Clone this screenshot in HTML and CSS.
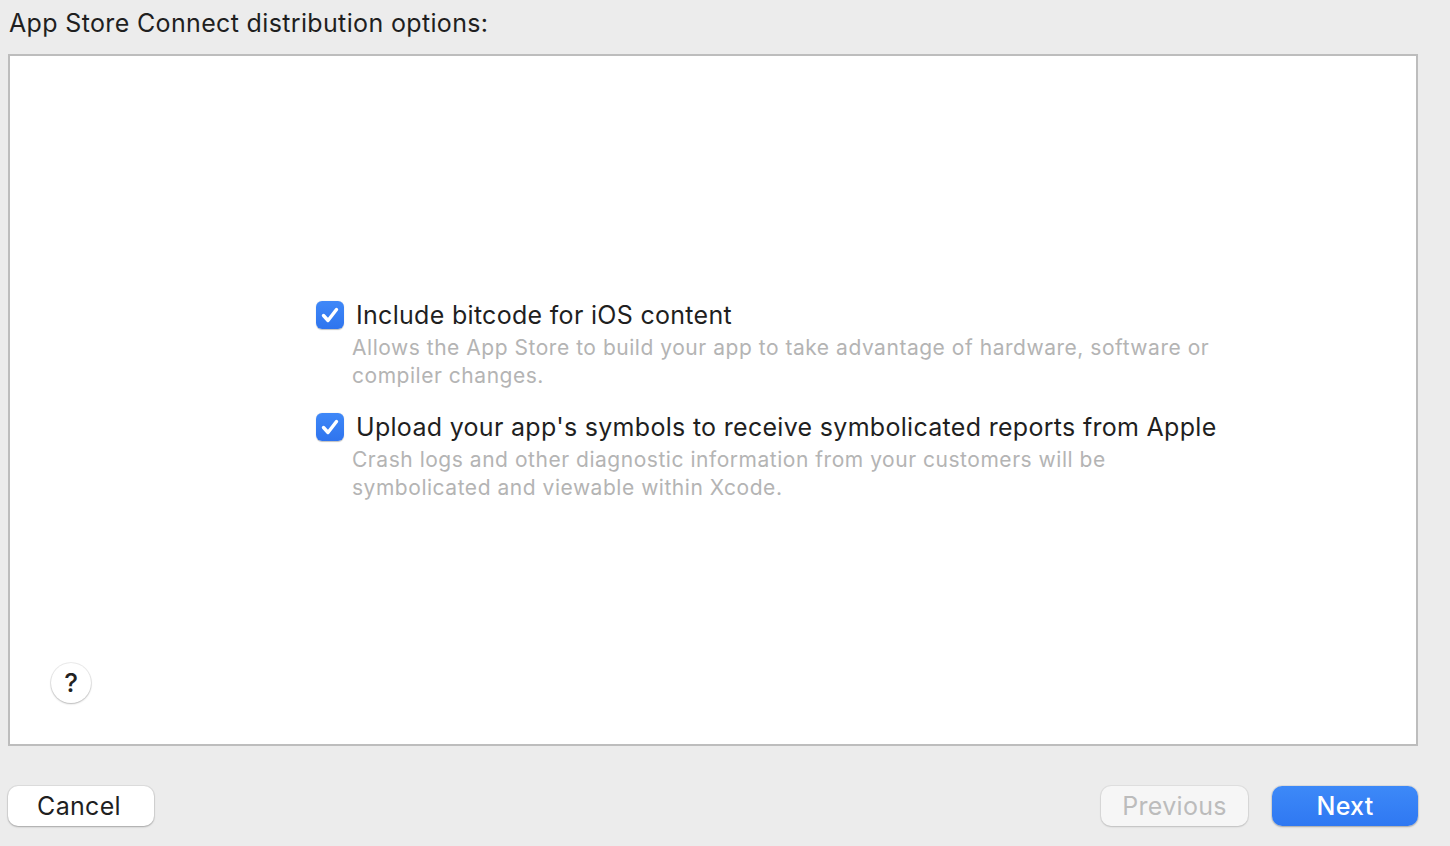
FILE: index.html
```html
<!DOCTYPE html>
<html lang="en">
<head>
<meta charset="utf-8">
<title>Distribution options</title>
<link rel="stylesheet" href="styles.css">
</head>
<body>
<div class="sheet">
  <h1 class="sheet-title">App Store Connect distribution options:</h1>
  <div class="panel">
    <div class="options">
      <div class="option">
        <span class="checkbox">
          <svg viewBox="0 0 28 28" width="28" height="28"><path d="M7.5 14.5 L12 19.5 L20.5 8.5" fill="none" stroke="#fff" stroke-width="3.4" stroke-linecap="round" stroke-linejoin="round"/></svg>
        </span>
        <div class="option-text">
          <div class="option-label">Include bitcode for iOS content</div>
          <div class="option-desc">Allows the App Store to build your app to take advantage of hardware, software or compiler changes.</div>
        </div>
      </div>
      <div class="option">
        <span class="checkbox">
          <svg viewBox="0 0 28 28" width="28" height="28"><path d="M7.5 14.5 L12 19.5 L20.5 8.5" fill="none" stroke="#fff" stroke-width="3.4" stroke-linecap="round" stroke-linejoin="round"/></svg>
        </span>
        <div class="option-text">
          <div class="option-label">Upload your app's symbols to receive symbolicated reports from Apple</div>
          <div class="option-desc">Crash logs and other diagnostic information from your customers will be symbolicated and viewable within Xcode.</div>
        </div>
      </div>
    </div>
    <button class="help" type="button">?</button>
  </div>
  <div class="footer">
    <button class="btn" type="button">Cancel</button>
    <div class="footer-right">
      <button class="btn btn-disabled" type="button">Previous</button>
      <button class="btn btn-primary" type="button">Next</button>
    </div>
  </div>
</div>
</body>
</html>
```
FILE: styles.css
```css
* {
  box-sizing: border-box;
}

html, body {
  margin: 0;
  height: 100%;
}

body {
  background: #ececec;
  font-family: Inter, "Noto Sans", "Liberation Sans", sans-serif;
  color: #1f1f1f;
}

.sheet {
  width: 1450px;
  height: 846px;
  padding: 0 32px 0 8px;
  display: flex;
  flex-direction: column;
}

.sheet-title {
  margin: 0;
  height: 54px;
  padding: 6px 0 0 1px;
  font-size: 25px;
  font-weight: 400;
  line-height: 34px;
  letter-spacing: 0.35px;
  color: #1f1f1f;
}

.panel {
  position: relative;
  height: 692px;
  background: #fff;
  border: 2px solid #bdbdbd;
  display: flex;
  align-items: center;
  padding-left: 306px;
}

.options {
  display: flex;
  flex-direction: column;
  gap: 22px;
  margin-top: 2px;
}

.option {
  display: flex;
  align-items: flex-start;
  gap: 12px;
}

.checkbox {
  flex: none;
  width: 28px;
  height: 28px;
  margin-top: 1px;
  border-radius: 6px;
  background: linear-gradient(#3f88f8, #2f74ee);
  box-shadow: 0 0.5px 1px rgba(0, 0, 0, 0.25);
  display: flex;
}

.option-label {
  font-size: 25px;
  line-height: 30px;
  letter-spacing: 0.3px;
  color: #1f1f1f;
}

.option-desc {
  width: 880px;
  margin-left: -4px;
  margin-top: 4px;
  font-size: 21px;
  line-height: 28px;
  color: #b4b4b4;
  letter-spacing: 0.53px;
}

.help {
  position: absolute;
  left: 41px;
  bottom: 41px;
  width: 40px;
  height: 40px;
  border-radius: 50%;
  border: none;
  background: #fff;
  box-shadow: 0 0 0 1px rgba(0, 0, 0, 0.07), 0 1px 2px rgba(0, 0, 0, 0.22);
  font-family: inherit;
  font-size: 26px;
  font-weight: 500;
  color: #222;
  padding: 0;
  line-height: 40px;
}

.footer {
  flex: 1;
  display: flex;
  align-items: flex-start;
  justify-content: space-between;
  padding-top: 40px;
}

.footer-right {
  display: flex;
  gap: 24px;
}

.btn {
  width: 146px;
  height: 40px;
  border: none;
  border-radius: 10px;
  background: #fff;
  box-shadow: 0 0 0 1px rgba(0, 0, 0, 0.06), 0 1px 2px rgba(0, 0, 0, 0.25);
  font-family: inherit;
  font-size: 25px;
  letter-spacing: 0.3px;
  color: #1f1f1f;
  padding: 0 4px 0 0;
}

.btn-disabled {
  width: 147px;
  padding: 0;
  background: #f6f6f6;
  color: #bcbcbc;
  box-shadow: 0 0 0 1px rgba(0, 0, 0, 0.05), 0 1px 2px rgba(0, 0, 0, 0.15);
}

.btn-primary {
  padding: 0;
  background: linear-gradient(#3d89f8, #2f78f2);
  color: #fff;
  font-weight: 500;
}
```
